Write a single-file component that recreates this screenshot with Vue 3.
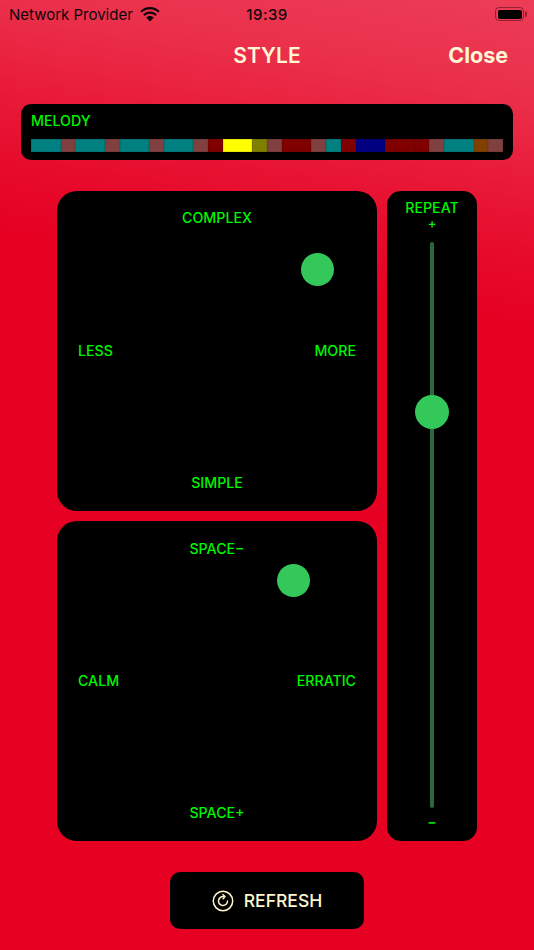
<script setup>
const segments = [
  ['teal', 2], ['mud', 1], ['teal', 2], ['mud', 1], ['teal', 2], ['mud', 1], ['teal', 2], ['mud', 1],
  ['red', 1], ['yellow', 2], ['olive', 1], ['mud', 1], ['red', 2], ['mud', 1], ['teal', 1], ['red', 1],
  ['navy', 2], ['red', 2], ['red', 1], ['mud', 1], ['teal', 2], ['amber', 1], ['mud', 1]
]
</script>

<template>
  <div class="screen">
    <div class="status">
      <div class="status-left">
        <span>Network Provider</span>
        <svg class="wifi" width="20" height="15" viewBox="0 0 20 15">
          <path d="M10 2.2c3.3 0 6.2 1.3 8.4 3.4l1.3-1.5C17.200 1.600 13.800 0 10 0S2.800 1.600.3 4.100l1.300 1.500C3.800 3.500 6.700 2.200 10 2.200z" />
          <path d="M10 6.700c2.100 0 4 .8 5.400 2.200l1.400-1.500C15 5.600 12.600 4.500 10 4.500S5 5.600 3.200 7.400l1.400 1.500C6 7.500 7.900 6.700 10 6.700z" />
          <path d="M10 9c-1.500 0-2.800.6-3.800 1.500L10 14.500l3.800-4C12.800 9.600 11.500 9 10 9z" />
        </svg>
      </div>
      <span class="time">19:39</span>
      <div class="battery"><i></i></div>
    </div>

    <header class="nav">
      <h1>STYLE</h1>
      <span class="close">Close</span>
    </header>

    <section class="melody">
      <div class="melody-title">MELODY</div>
      <div class="bar">
        <span
          v-for="(s, i) in segments"
          :key="i"
          :class="['seg', s[0], 'u' + s[1]]"
        ></span>
      </div>
    </section>

    <main class="controls">
      <div class="pads">
        <div class="pad pad-a">
          <span>COMPLEX</span>
          <div class="middle"><span>LESS</span><span>MORE</span></div>
          <span>SIMPLE</span>
          <i class="knob knob-a"></i>
        </div>
        <div class="pad pad-b">
          <span>SPACE−</span>
          <div class="middle"><span>CALM</span><span>ERRATIC</span></div>
          <span>SPACE+</span>
          <i class="knob knob-b"></i>
        </div>
      </div>
      <div class="repeat">
        <span class="repeat-title">REPEAT</span>
        <span class="plus">+</span>
        <div class="track"><i class="thumb"></i></div>
        <span class="minus">−</span>
      </div>
    </main>

    <div class="footer">
      <button class="refresh">
        <svg width="22" height="22" viewBox="0 0 22 22" fill="none" stroke="#fdf6cf">
          <circle cx="11" cy="11" r="9.700" stroke-width="1.500" />
          <path d="M11.600 6.600A4.500 4.500 0 1 0 15.500 11" stroke-width="1.500" stroke-linecap="round" />
          <path d="M10.800 4.500l2.300 2-2 2.200" stroke-width="1.400" stroke-linecap="round" stroke-linejoin="round" />
        </svg>
        <span>REFRESH</span>
      </button>
    </div>
  </div>
</template>

<style>
html, body { margin: 0; padding: 0; }
</style>

<style scoped>
.screen {
  width: 534px;
  height: 950px;
  overflow: hidden;
  display: flex;
  flex-direction: column;
  font-family: Inter, "Liberation Sans", sans-serif;
  background:
    linear-gradient(190deg, rgba(255,255,255,.24) 0%, rgba(255,255,255,.19) 9%, rgba(255,255,255,.11) 17%, rgba(255,255,255,.04) 25%, rgba(255,255,255,0) 32%),
    #e60022;
}
.status {
  height: 28px;
  padding: 0 8px 0 9px;
  display: flex;
  align-items: center;
  position: relative;
  font-size: 15px;
  color: #0c0508;
}
.status-left { display: flex; align-items: center; gap: 7px; }
.wifi { fill: #0c0508; }
.time {
  position: absolute;
  left: 0;
  right: 0;
  text-align: center;
  font-weight: 500;
  letter-spacing: .5px;
}
.battery {
  margin-left: auto;
  width: 29px;
  height: 14px;
  margin-right: 2px;
  padding: 1.500px;
  box-sizing: border-box;
  border: 1px solid rgba(60,5,20,.5);
  border-radius: 4px;
  position: relative;
}
.battery::after {
  content: "";
  position: absolute;
  right: -4px;
  top: 3px;
  width: 2px;
  height: 6px;
  border-radius: 0 2px 2px 0;
  background: rgba(60,5,20,.5);
}
.battery i { display: block; height: 100%; background: #000; border-radius: 2px; }
.nav {
  height: 54px;
  position: relative;
  display: flex;
  align-items: center;
  justify-content: center;
  color: #fff8d6;
}
.nav h1 { margin: 0; font-size: 21px; font-weight: 600; }
.close {
  position: absolute;
  right: 26px;
  font-size: 21.500px;
  font-weight: 700;
}
.melody {
  margin: 22px 21px 0;
  height: 56px;
  box-sizing: border-box;
  padding: 8px 10px;
  background: #000;
  border-radius: 10px;
  display: flex;
  flex-direction: column;
  justify-content: space-between;
}
.melody-title { font-size: 14.200px; font-weight: 500; line-height: 18px; color: #00f500; }
.bar { display: flex; height: 13px; }
.seg { display: block; min-width: 0; box-shadow: inset 0 0 0 .5px rgba(0,0,0,.18); }
.u1 { flex: 1 1 0; }
.u2 { flex: 2 1 0; }
.teal { background: #008080; }
.mud { background: #804040; }
.red { background: #800000; }
.yellow { background: #ffff00; }
.olive { background: #808000; }
.navy { background: #000080; }
.amber { background: #804000; }
.controls {
  margin: 31px 57px 0;
  display: flex;
  gap: 10px;
}
.pads { display: flex; flex-direction: column; gap: 10px; width: 320px; }
.pad {
  height: 320px;
  box-sizing: border-box;
  background: #000;
  border-radius: 20px;
  position: relative;
  display: flex;
  flex-direction: column;
  justify-content: space-between;
  align-items: center;
  color: #00f500;
  font-size: 14.200px;
  font-weight: 500;
  line-height: 18px;
}
.pad-a { padding: 18px 21px 19px; }
.pad-b { padding: 19px 21px; }
.middle { width: 100%; display: flex; justify-content: space-between; }
.knob {
  position: absolute;
  width: 33px;
  height: 33px;
  border-radius: 50%;
  background: #34c759;
}
.knob-a { left: 243.500px; top: 61.500px; }
.knob-b { left: 220px; top: 43px; }
.repeat {
  width: 90px;
  height: 650px;
  box-sizing: border-box;
  padding-top: 9px;
  background: #000;
  border-radius: 14px;
  display: flex;
  flex-direction: column;
  align-items: center;
  color: #00f500;
  font-size: 14.200px;
  font-weight: 500;
  line-height: 16px;
}
.plus { font-size: 13px; line-height: 14px; }
.track {
  width: 4px;
  height: 566px;
  margin-top: 12px;
  border-radius: 2px;
  background: #2a6a3a;
  position: relative;
}
.thumb {
  position: absolute;
  left: -15px;
  top: 153px;
  width: 34px;
  height: 34px;
  border-radius: 50%;
  background: #34c759;
}
.minus { font-size: 14px; font-weight: 700; line-height: 16px; margin-top: 6px; color: #00d000; }
.footer { margin-top: 31px; display: flex; justify-content: center; }
.refresh {
  width: 194px;
  height: 57px;
  border: 0;
  border-radius: 10px;
  background: #000;
  color: #fdf6cf;
  display: flex;
  align-items: center;
  justify-content: center;
  gap: 10px;
  font-family: Inter, sans-serif;
  font-size: 17.500px;
  font-weight: 500;
}
</style>
